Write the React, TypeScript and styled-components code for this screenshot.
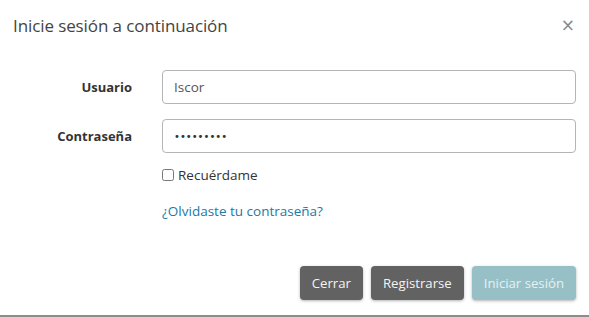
import styled, { createGlobalStyle } from "styled-components";

const GlobalStyle = createGlobalStyle`
  html, body {
    margin: 0;
    padding: 0;
    background: #ffffff;
  }
  body {
    font-family: "Open Sans", "Noto Sans", sans-serif;
    color: #333333;
  }
`;

const Modal = styled("div")`
  width: 589px;
  height: 315px;
  display: flex;
  flex-direction: column;
  background: #ffffff;
  border-bottom: 2px solid #8c8c8c;
  box-sizing: content-box;
`;

const Header = styled("div")`
  display: flex;
  justify-content: space-between;
  align-items: center;
  padding: 10px 13px 0 13px;
  height: 30px;
`;

const Title = styled("h4")`
  margin: 0;
  font-size: 17px;
  font-weight: 400;
  color: #444444;
  letter-spacing: -0.1px;
`;

const CloseButton = styled("button")`
  border: none;
  background: none;
  padding: 0;
  margin-right: 1px;
  font-size: 17px;
  line-height: 1;
  color: #8a8a8a;
  cursor: pointer;
  font-family: "DejaVu Sans", sans-serif;
`;

const Body = styled("div")`
  display: flex;
  flex-direction: column;
  padding: 30px 13px 0 0;
`;

const FormRow = styled("div")<{ $gap?: number }>`
  display: grid;
  grid-template-columns: 132px 1fr;
  column-gap: 30px;
  align-items: center;
  margin-bottom: ${(p) => p.$gap ?? 15}px;
`;

const Label = styled("label")`
  text-align: right;
  font-size: 13px;
  font-weight: 700;
  color: #333333;
`;

const Input = styled("input")`
  height: 34px;
  box-sizing: border-box;
  border: 1px solid #b5b5b5;
  border-radius: 4px;
  padding: 0 11px;
  font-family: "Open Sans", "Noto Sans", sans-serif;
  font-size: 13.5px;
  color: #555555;
  outline: none;
  &[type="password"] {
    font-family: "DejaVu Sans", sans-serif;
    font-size: 10px;
    letter-spacing: 0px;
    color: #333333;
  }
`;

const CheckLabel = styled("label")`
  display: flex;
  align-items: center;
  gap: 4px;
  font-size: 13.5px;
  color: #333333;
`;

const CheckBox = styled("input")`
  margin: 0;
  width: 12px;
  height: 12px;
`;

const Link = styled("a")`
  font-size: 13.5px;
  color: #2079a8;
  text-decoration: none;
`;

const Footer = styled("div")`
  display: flex;
  justify-content: flex-end;
  gap: 8px;
  padding: 0 13px;
  margin-top: auto;
  margin-bottom: 15px;
`;

const Button = styled("button")<{ $variant: "dark" | "primary" }>`
  height: 34px;
  padding: 0 12px;
  border: none;
  border-radius: 4px;
  font-family: "Open Sans", "Noto Sans", sans-serif;
  font-size: 13.2px;
  box-shadow: 0 1px 3px rgba(0, 0, 0, 0.3);
  background: ${(p) => (p.$variant === "dark" ? "#626262" : "#96c0c6")};
  color: ${(p) => (p.$variant === "dark" ? "#f4f4f4" : "#e6f0f2")};
  cursor: pointer;
`;

export default function App() {
  return (
    <>
      <GlobalStyle />
      <Modal>
        <Header>
          <Title>Inicie sesión a continuación</Title>
          <CloseButton aria-label="Cerrar">×</CloseButton>
        </Header>
        <Body>
          <FormRow>
            <Label htmlFor="user">Usuario</Label>
            <Input id="user" type="text" defaultValue="Iscor" />
          </FormRow>
          <FormRow $gap={13}>
            <Label htmlFor="pass">Contraseña</Label>
            <Input id="pass" type="password" defaultValue="123456789" />
          </FormRow>
          <FormRow $gap={15}>
            <span />
            <CheckLabel>
              <CheckBox type="checkbox" />
              Recuérdame
            </CheckLabel>
          </FormRow>
          <FormRow>
            <span />
            <div>
              <Link href="#">¿Olvidaste tu contraseña?</Link>
            </div>
          </FormRow>
        </Body>
        <Footer>
          <Button $variant="dark">Cerrar</Button>
          <Button $variant="dark">Registrarse</Button>
          <Button $variant="primary">Iniciar sesión</Button>
        </Footer>
      </Modal>
    </>
  );
}
